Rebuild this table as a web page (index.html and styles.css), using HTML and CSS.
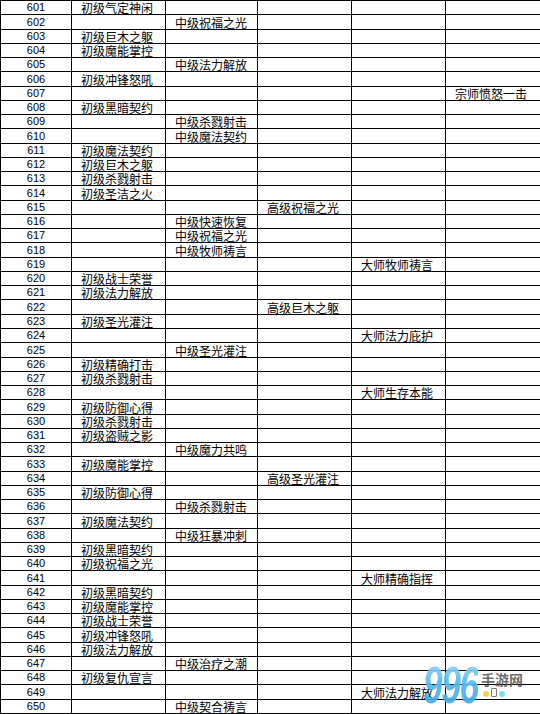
FILE: index.html
```html
<!DOCTYPE html>
<html lang="zh-CN">
<head>
<meta charset="utf-8">
<title>表</title>
<link rel="stylesheet" href="styles.css">
</head>
<body>
<div class="sheet">
<div class="row"><div class="n">601</div><div class="c">初级气定神闲</div><div class="c"></div><div class="c"></div><div class="c"></div><div class="c"></div></div>
<div class="row"><div class="n">602</div><div class="c"></div><div class="c">中级祝福之光</div><div class="c"></div><div class="c"></div><div class="c"></div></div>
<div class="row"><div class="n">603</div><div class="c">初级巨木之躯</div><div class="c"></div><div class="c"></div><div class="c"></div><div class="c"></div></div>
<div class="row"><div class="n">604</div><div class="c">初级魔能掌控</div><div class="c"></div><div class="c"></div><div class="c"></div><div class="c"></div></div>
<div class="row"><div class="n">605</div><div class="c"></div><div class="c">中级法力解放</div><div class="c"></div><div class="c"></div><div class="c"></div></div>
<div class="row"><div class="n">606</div><div class="c">初级冲锋怒吼</div><div class="c"></div><div class="c"></div><div class="c"></div><div class="c"></div></div>
<div class="row"><div class="n">607</div><div class="c"></div><div class="c"></div><div class="c"></div><div class="c"></div><div class="c">宗师愤怒一击</div></div>
<div class="row"><div class="n">608</div><div class="c">初级黑暗契约</div><div class="c"></div><div class="c"></div><div class="c"></div><div class="c"></div></div>
<div class="row"><div class="n">609</div><div class="c"></div><div class="c">中级杀戮射击</div><div class="c"></div><div class="c"></div><div class="c"></div></div>
<div class="row"><div class="n">610</div><div class="c"></div><div class="c">中级魔法契约</div><div class="c"></div><div class="c"></div><div class="c"></div></div>
<div class="row"><div class="n">611</div><div class="c">初级魔法契约</div><div class="c"></div><div class="c"></div><div class="c"></div><div class="c"></div></div>
<div class="row"><div class="n">612</div><div class="c">初级巨木之躯</div><div class="c"></div><div class="c"></div><div class="c"></div><div class="c"></div></div>
<div class="row"><div class="n">613</div><div class="c">初级杀戮射击</div><div class="c"></div><div class="c"></div><div class="c"></div><div class="c"></div></div>
<div class="row"><div class="n">614</div><div class="c">初级圣洁之火</div><div class="c"></div><div class="c"></div><div class="c"></div><div class="c"></div></div>
<div class="row"><div class="n">615</div><div class="c"></div><div class="c"></div><div class="c">高级祝福之光</div><div class="c"></div><div class="c"></div></div>
<div class="row"><div class="n">616</div><div class="c"></div><div class="c">中级快速恢复</div><div class="c"></div><div class="c"></div><div class="c"></div></div>
<div class="row"><div class="n">617</div><div class="c"></div><div class="c">中级祝福之光</div><div class="c"></div><div class="c"></div><div class="c"></div></div>
<div class="row"><div class="n">618</div><div class="c"></div><div class="c">中级牧师祷言</div><div class="c"></div><div class="c"></div><div class="c"></div></div>
<div class="row"><div class="n">619</div><div class="c"></div><div class="c"></div><div class="c"></div><div class="c">大师牧师祷言</div><div class="c"></div></div>
<div class="row"><div class="n">620</div><div class="c">初级战士荣誉</div><div class="c"></div><div class="c"></div><div class="c"></div><div class="c"></div></div>
<div class="row"><div class="n">621</div><div class="c">初级法力解放</div><div class="c"></div><div class="c"></div><div class="c"></div><div class="c"></div></div>
<div class="row"><div class="n">622</div><div class="c"></div><div class="c"></div><div class="c">高级巨木之躯</div><div class="c"></div><div class="c"></div></div>
<div class="row"><div class="n">623</div><div class="c">初级圣光灌注</div><div class="c"></div><div class="c"></div><div class="c"></div><div class="c"></div></div>
<div class="row"><div class="n">624</div><div class="c"></div><div class="c"></div><div class="c"></div><div class="c">大师法力庇护</div><div class="c"></div></div>
<div class="row"><div class="n">625</div><div class="c"></div><div class="c">中级圣光灌注</div><div class="c"></div><div class="c"></div><div class="c"></div></div>
<div class="row"><div class="n">626</div><div class="c">初级精确打击</div><div class="c"></div><div class="c"></div><div class="c"></div><div class="c"></div></div>
<div class="row"><div class="n">627</div><div class="c">初级杀戮射击</div><div class="c"></div><div class="c"></div><div class="c"></div><div class="c"></div></div>
<div class="row"><div class="n">628</div><div class="c"></div><div class="c"></div><div class="c"></div><div class="c">大师生存本能</div><div class="c"></div></div>
<div class="row"><div class="n">629</div><div class="c">初级防御心得</div><div class="c"></div><div class="c"></div><div class="c"></div><div class="c"></div></div>
<div class="row"><div class="n">630</div><div class="c">初级杀戮射击</div><div class="c"></div><div class="c"></div><div class="c"></div><div class="c"></div></div>
<div class="row"><div class="n">631</div><div class="c">初级盗贼之影</div><div class="c"></div><div class="c"></div><div class="c"></div><div class="c"></div></div>
<div class="row"><div class="n">632</div><div class="c"></div><div class="c">中级魔力共鸣</div><div class="c"></div><div class="c"></div><div class="c"></div></div>
<div class="row"><div class="n">633</div><div class="c">初级魔能掌控</div><div class="c"></div><div class="c"></div><div class="c"></div><div class="c"></div></div>
<div class="row"><div class="n">634</div><div class="c"></div><div class="c"></div><div class="c">高级圣光灌注</div><div class="c"></div><div class="c"></div></div>
<div class="row"><div class="n">635</div><div class="c">初级防御心得</div><div class="c"></div><div class="c"></div><div class="c"></div><div class="c"></div></div>
<div class="row"><div class="n">636</div><div class="c"></div><div class="c">中级杀戮射击</div><div class="c"></div><div class="c"></div><div class="c"></div></div>
<div class="row"><div class="n">637</div><div class="c">初级魔法契约</div><div class="c"></div><div class="c"></div><div class="c"></div><div class="c"></div></div>
<div class="row"><div class="n">638</div><div class="c"></div><div class="c">中级狂暴冲刺</div><div class="c"></div><div class="c"></div><div class="c"></div></div>
<div class="row"><div class="n">639</div><div class="c">初级黑暗契约</div><div class="c"></div><div class="c"></div><div class="c"></div><div class="c"></div></div>
<div class="row"><div class="n">640</div><div class="c">初级祝福之光</div><div class="c"></div><div class="c"></div><div class="c"></div><div class="c"></div></div>
<div class="row"><div class="n">641</div><div class="c"></div><div class="c"></div><div class="c"></div><div class="c">大师精确指挥</div><div class="c"></div></div>
<div class="row"><div class="n">642</div><div class="c">初级黑暗契约</div><div class="c"></div><div class="c"></div><div class="c"></div><div class="c"></div></div>
<div class="row"><div class="n">643</div><div class="c">初级魔能掌控</div><div class="c"></div><div class="c"></div><div class="c"></div><div class="c"></div></div>
<div class="row"><div class="n">644</div><div class="c">初级战士荣誉</div><div class="c"></div><div class="c"></div><div class="c"></div><div class="c"></div></div>
<div class="row"><div class="n">645</div><div class="c">初级冲锋怒吼</div><div class="c"></div><div class="c"></div><div class="c"></div><div class="c"></div></div>
<div class="row"><div class="n">646</div><div class="c">初级法力解放</div><div class="c"></div><div class="c"></div><div class="c"></div><div class="c"></div></div>
<div class="row"><div class="n">647</div><div class="c"></div><div class="c">中级治疗之潮</div><div class="c"></div><div class="c"></div><div class="c"></div></div>
<div class="row"><div class="n">648</div><div class="c">初级复仇宣言</div><div class="c"></div><div class="c"></div><div class="c"></div><div class="c"></div></div>
<div class="row"><div class="n">649</div><div class="c"></div><div class="c"></div><div class="c"></div><div class="c">大师法力解放</div><div class="c"></div></div>
<div class="row"><div class="n">650</div><div class="c"></div><div class="c">中级契合祷言</div><div class="c"></div><div class="c"></div><div class="c"></div></div>
</div>
<div class="mark">
<span class="mark-num">996</span>
<span class="mark-name">手游网</span>
<span class="mark-dots"><i class="dot y"></i><i class="phone"></i><i class="dot b"></i></span>
</div>
</body>
</html>
```
FILE: styles.css
```css
html, body {
  margin: 0;
  padding: 0;
  background: #ffffff;
  overflow: hidden;
}
body {
  width: 540px;
  height: 714px;
  position: relative;
}
.sheet {
  width: 541px;
  height: 713px;
  border-top: 1px solid #000;
  border-left: 1px solid #000;
  display: grid;
  grid-template-rows: repeat(50, 1fr);
}
.row {
  display: grid;
  grid-template-columns: 71px 94px 92px 94px 94px 95px;
  min-height: 0;
}
.n, .c {
  border-right: 1px solid #000;
  border-bottom: 1px solid #000;
  display: flex;
  align-items: flex-end;
  min-height: 0;
  white-space: nowrap;
  color: #000;
}
.n {
  justify-content: center;
  font-family: "Liberation Sans", Arial, sans-serif;
  font-size: 11px;
  line-height: 12px;
  padding-bottom: 1px;
}
.c {
  font-family: "Noto Sans CJK SC", sans-serif;
  font-size: 12px;
  line-height: 12px;
  padding-left: 9px;
}
.mark {
  position: absolute;
  left: 423px;
  top: 664px;
  width: 112px;
  height: 46px;
}
.mark-num {
  position: absolute;
  left: 0;
  top: -5px;
  font-family: "Liberation Sans", Arial, sans-serif;
  font-weight: bold;
  font-style: italic;
  font-size: 52px;
  line-height: 52px;
  letter-spacing: -2px;
  transform: scaleX(0.68);
  transform-origin: left top;
  color: #4fb6ea;
  background: linear-gradient(180deg, #9ad9f7 0%, #55bbee 45%, #3aa6e2 100%);
  -webkit-background-clip: text;
  background-clip: text;
  -webkit-text-fill-color: transparent;
  opacity: 0.92;
}
.mark-name {
  position: absolute;
  left: 58px;
  top: 8px;
  font-family: "Noto Sans CJK SC", sans-serif;
  font-size: 14px;
  line-height: 15px;
  font-weight: bold;
  color: rgba(80, 80, 80, 0.85);
}
.mark-dots {
  position: absolute;
  left: 60px;
  top: 24px;
  display: flex;
  align-items: flex-end;
  gap: 2px;
}
.dot {
  width: 6px;
  height: 6px;
  border-radius: 50%;
}
.dot.y { background: rgba(250, 200, 40, 0.85); }
.dot.b { background: rgba(90, 220, 240, 0.85); }
.phone {
  width: 6px;
  height: 9px;
  border: 1px solid rgba(90, 90, 90, 0.8);
  border-radius: 1px;
  box-sizing: border-box;
}
```
